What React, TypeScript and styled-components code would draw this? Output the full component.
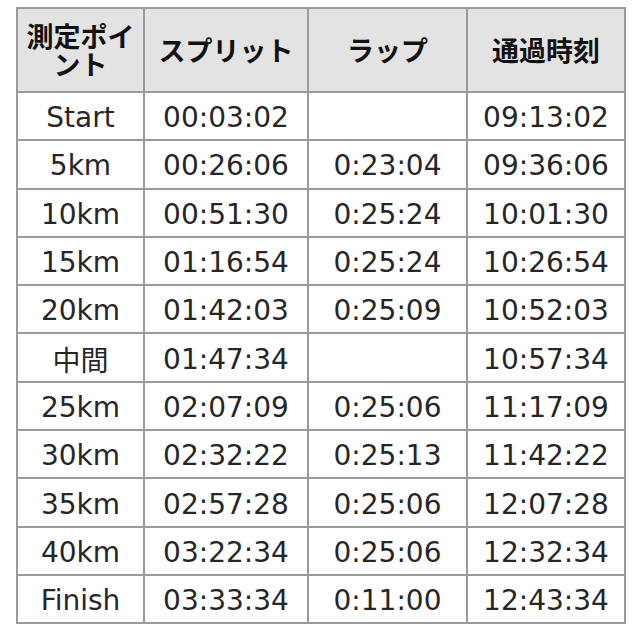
import React from "react";
import styled, { createGlobalStyle } from "styled-components";

const Global = createGlobalStyle`
  html, body { margin: 0; padding: 0; background: #ffffff; }
  body { font-family: "DejaVu Sans", "Noto Sans CJK JP", sans-serif; color: #111; }
`;

const Page = styled.div`
  padding: 7px 16px 0 16px;
`;

const Table = styled.table`
  border-collapse: collapse;
  table-layout: fixed;
  width: 608px;
  border: 2px solid #9a9a9a;
`;

const Col = styled.col<{ $w: number }>`
  width: ${(p) => p.$w}px;
`;

const HeadCell = styled.th`
  background: #e3e3e3;
  border: 2px solid #9a9a9a;
  font-family: "Noto Sans CJK JP", sans-serif;
  font-size: 27px;
  font-weight: 700;
  color: #111;
  text-align: center;
  padding: 0;
  height: 82px;
`;

const HeadLine = styled.span`
  display: block;
  white-space: nowrap;
  line-height: 28px;
`;

const Cell = styled.td`
  border: 2px solid #9a9a9a;
  font-family: "DejaVu Sans", "Noto Sans CJK JP", sans-serif;
  font-size: 28px;
  font-weight: 400;
  color: #262626;
  text-align: center;
  padding: 3px 0 0 0;
  height: 43.3px;
`;

type Row = [string, string, string, string];

const rows: Row[] = [
  ["Start", "00:03:02", "", "09:13:02"],
  ["5km", "00:26:06", "0:23:04", "09:36:06"],
  ["10km", "00:51:30", "0:25:24", "10:01:30"],
  ["15km", "01:16:54", "0:25:24", "10:26:54"],
  ["20km", "01:42:03", "0:25:09", "10:52:03"],
  ["中間", "01:47:34", "", "10:57:34"],
  ["25km", "02:07:09", "0:25:06", "11:17:09"],
  ["30km", "02:32:22", "0:25:13", "11:42:22"],
  ["35km", "02:57:28", "0:25:06", "12:07:28"],
  ["40km", "03:22:34", "0:25:06", "12:32:34"],
  ["Finish", "03:33:34", "0:11:00", "12:43:34"],
];

const widths = [127, 164, 159, 158];
const headers: string[][] = [["測定ポイ", "ント"], ["スプリット"], ["ラップ"], ["通過時刻"]];

export default function App() {
  return (
    <>
      <Global />
      <Page>
        <Table>
          <colgroup>
            {widths.map((w, i) => (
              <Col key={i} $w={w} />
            ))}
          </colgroup>
          <thead>
            <tr>
              {headers.map((h, i) => (
                <HeadCell key={i}>
                  {h.map((line, j) => (
                    <HeadLine key={j}>{line}</HeadLine>
                  ))}
                </HeadCell>
              ))}
            </tr>
          </thead>
          <tbody>
            {rows.map((r) => (
              <tr key={r[0]}>
                {r.map((c, i) => (
                  <Cell key={i}>{c}</Cell>
                ))}
              </tr>
            ))}
          </tbody>
        </Table>
      </Page>
    </>
  );
}
